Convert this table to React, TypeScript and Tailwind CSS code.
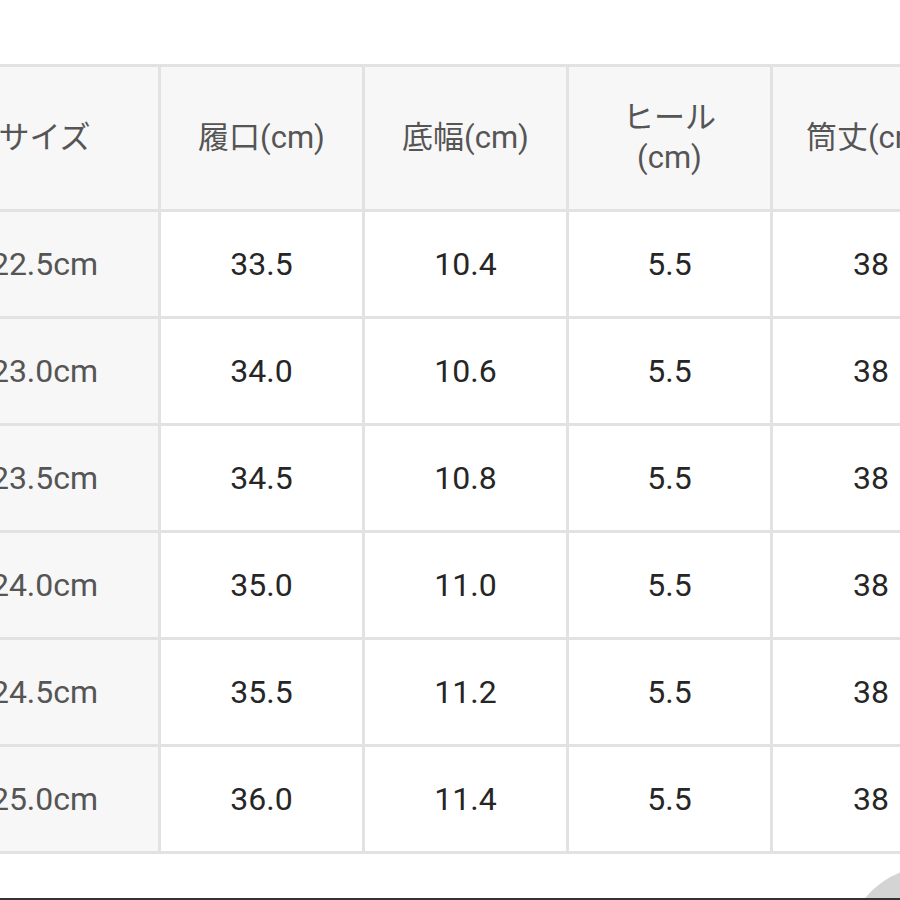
const headers = ['サイズ', '履口(cm)', '底幅(cm)', 'ヒール\n(cm)', '筒丈(cm)'];

const rows = [
  ['22.5cm', '33.5', '10.4', '5.5', '38'],
  ['23.0cm', '34.0', '10.6', '5.5', '38'],
  ['23.5cm', '34.5', '10.8', '5.5', '38'],
  ['24.0cm', '35.0', '11.0', '5.5', '38'],
  ['24.5cm', '35.5', '11.2', '5.5', '38'],
  ['25.0cm', '36.0', '11.4', '5.5', '38'],
];

export default function App() {
  return (
    <div
      className="relative h-[900px] w-[900px] overflow-hidden bg-white"
      style={{ fontFamily: 'Roboto, "Noto Sans CJK JP", sans-serif' }}
    >
      {/* サイズ表 */}
      <div className="mt-[64px] ml-[-72px] grid w-[1100px] grid-cols-[227px_201px_201px_201px_201px_201px] gap-[3px] bg-[#e2e2e2] p-[3px]">
        {headers.map((h, i) => (
          <div
            key={h}
            className={`flex h-[142px] items-center whitespace-pre-line bg-[#f7f7f7] text-[31px] leading-[40px] text-[#555] ${
              i === 4 ? 'justify-start pl-[33px]' : 'justify-center text-center'
            }`}
          >
            {h}
          </div>
        ))}
        <div className="bg-[#f7f7f7]" />
        {rows.map((r) => (
          <>
            {r.map((c, i) => (
              <div
                key={r[0] + i}
                className={`flex h-[104px] items-center text-[32px] ${
                  i === 0 ? 'justify-center bg-[#f7f7f7] text-[#555]' : 'bg-white text-[#262626]'
                } ${i === 4 ? 'justify-start pl-[80px]' : 'justify-center'}`}
              >
                {c}
              </div>
            ))}
            <div key={r[0] + 'x'} className="bg-white" />
          </>
        ))}
      </div>

      {/* floating button */}
      <div className="absolute top-[867px] left-[847px] h-[166px] w-[166px] rounded-full bg-[#d4d4d4]" />
      <div className="absolute bottom-0 left-0 h-[2px] w-full bg-[#333]" />
    </div>
  );
}
